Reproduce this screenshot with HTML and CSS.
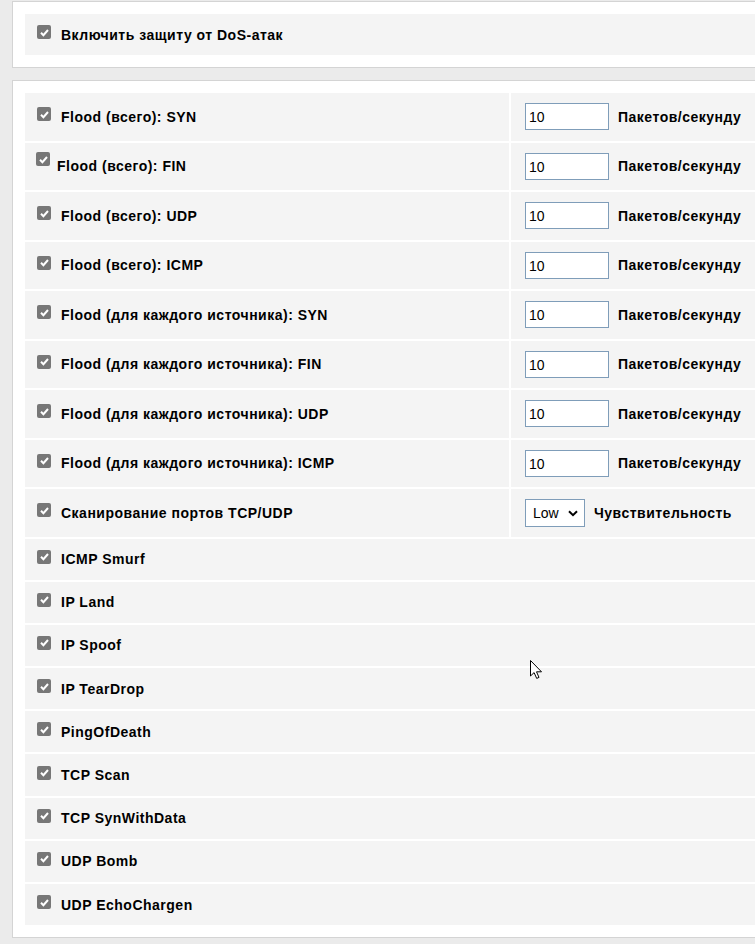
FILE: index.html
```html
<!DOCTYPE html>
<html>
<head>
<title>DoS</title>
<link rel="stylesheet" href="styles.css">
</head>
<body>
<div class="panel panel-top">
    <div class="line">
        <span class="box"><svg viewBox="0 0 13 13" width="13" height="13"><path d="M3 6.8l2.4 2.4 4.6-5.2" fill="none" stroke="#fff" stroke-width="2"/></svg></span>
        <span class="label">Включить защиту от DoS-атак</span>
    </div>
</div>

<div class="panel">
    <div class="grid">
        <div class="cell tall">
            <span class="box"><svg viewBox="0 0 13 13" width="13" height="13"><path d="M3 6.8l2.4 2.4 4.6-5.2" fill="none" stroke="#fff" stroke-width="2"/></svg></span>
            <span class="label">Flood (всего): SYN</span>
        </div>
        <div class="cell tall right">
            <input class="num" type="text" value="10"><span class="label unit">Пакетов/секунду</span>
        </div>

        <div class="cell tall tight">
            <span class="box"><svg viewBox="0 0 13 13" width="13" height="13"><path d="M3 6.8l2.4 2.4 4.6-5.2" fill="none" stroke="#fff" stroke-width="2"/></svg></span>
            <span class="label">Flood (всего): FIN</span>
        </div>
        <div class="cell tall right">
            <input class="num" type="text" value="10"><span class="label unit">Пакетов/секунду</span>
        </div>

        <div class="cell tall">
            <span class="box"><svg viewBox="0 0 13 13" width="13" height="13"><path d="M3 6.8l2.4 2.4 4.6-5.2" fill="none" stroke="#fff" stroke-width="2"/></svg></span>
            <span class="label">Flood (всего): UDP</span>
        </div>
        <div class="cell tall right">
            <input class="num" type="text" value="10"><span class="label unit">Пакетов/секунду</span>
        </div>

        <div class="cell tall">
            <span class="box"><svg viewBox="0 0 13 13" width="13" height="13"><path d="M3 6.8l2.4 2.4 4.6-5.2" fill="none" stroke="#fff" stroke-width="2"/></svg></span>
            <span class="label">Flood (всего): ICMP</span>
        </div>
        <div class="cell tall right">
            <input class="num" type="text" value="10"><span class="label unit">Пакетов/секунду</span>
        </div>

        <div class="cell tall">
            <span class="box"><svg viewBox="0 0 13 13" width="13" height="13"><path d="M3 6.8l2.4 2.4 4.6-5.2" fill="none" stroke="#fff" stroke-width="2"/></svg></span>
            <span class="label">Flood (для каждого источника): SYN</span>
        </div>
        <div class="cell tall right">
            <input class="num" type="text" value="10"><span class="label unit">Пакетов/секунду</span>
        </div>

        <div class="cell tall">
            <span class="box"><svg viewBox="0 0 13 13" width="13" height="13"><path d="M3 6.8l2.4 2.4 4.6-5.2" fill="none" stroke="#fff" stroke-width="2"/></svg></span>
            <span class="label">Flood (для каждого источника): FIN</span>
        </div>
        <div class="cell tall right">
            <input class="num" type="text" value="10"><span class="label unit">Пакетов/секунду</span>
        </div>

        <div class="cell tall">
            <span class="box"><svg viewBox="0 0 13 13" width="13" height="13"><path d="M3 6.8l2.4 2.4 4.6-5.2" fill="none" stroke="#fff" stroke-width="2"/></svg></span>
            <span class="label">Flood (для каждого источника): UDP</span>
        </div>
        <div class="cell tall right">
            <input class="num" type="text" value="10"><span class="label unit">Пакетов/секунду</span>
        </div>

        <div class="cell tall">
            <span class="box"><svg viewBox="0 0 13 13" width="13" height="13"><path d="M3 6.8l2.4 2.4 4.6-5.2" fill="none" stroke="#fff" stroke-width="2"/></svg></span>
            <span class="label">Flood (для каждого источника): ICMP</span>
        </div>
        <div class="cell tall right">
            <input class="num" type="text" value="10"><span class="label unit">Пакетов/секунду</span>
        </div>

        <div class="cell tall">
            <span class="box"><svg viewBox="0 0 13 13" width="13" height="13"><path d="M3 6.8l2.4 2.4 4.6-5.2" fill="none" stroke="#fff" stroke-width="2"/></svg></span>
            <span class="label">Сканирование портов TCP/UDP</span>
        </div>
        <div class="cell tall right">
            <div class="sel"><span>Low</span><svg viewBox="0 0 10 7" width="10" height="7"><path d="M1 1.2l4 4 4-4" fill="none" stroke="#000" stroke-width="2"/></svg></div><span class="label sens">Чувствительность</span>
        </div>

        <div class="cell wide">
            <span class="box"><svg viewBox="0 0 13 13" width="13" height="13"><path d="M3 6.8l2.4 2.4 4.6-5.2" fill="none" stroke="#fff" stroke-width="2"/></svg></span>
            <span class="label">ICMP Smurf</span>
        </div>
        <div class="cell wide">
            <span class="box"><svg viewBox="0 0 13 13" width="13" height="13"><path d="M3 6.8l2.4 2.4 4.6-5.2" fill="none" stroke="#fff" stroke-width="2"/></svg></span>
            <span class="label">IP Land</span>
        </div>
        <div class="cell wide">
            <span class="box"><svg viewBox="0 0 13 13" width="13" height="13"><path d="M3 6.8l2.4 2.4 4.6-5.2" fill="none" stroke="#fff" stroke-width="2"/></svg></span>
            <span class="label">IP Spoof</span>
        </div>
        <div class="cell wide">
            <span class="box"><svg viewBox="0 0 13 13" width="13" height="13"><path d="M3 6.8l2.4 2.4 4.6-5.2" fill="none" stroke="#fff" stroke-width="2"/></svg></span>
            <span class="label">IP TearDrop</span>
        </div>
        <div class="cell wide">
            <span class="box"><svg viewBox="0 0 13 13" width="13" height="13"><path d="M3 6.8l2.4 2.4 4.6-5.2" fill="none" stroke="#fff" stroke-width="2"/></svg></span>
            <span class="label">PingOfDeath</span>
        </div>
        <div class="cell wide">
            <span class="box"><svg viewBox="0 0 13 13" width="13" height="13"><path d="M3 6.8l2.4 2.4 4.6-5.2" fill="none" stroke="#fff" stroke-width="2"/></svg></span>
            <span class="label">TCP Scan</span>
        </div>
        <div class="cell wide">
            <span class="box"><svg viewBox="0 0 13 13" width="13" height="13"><path d="M3 6.8l2.4 2.4 4.6-5.2" fill="none" stroke="#fff" stroke-width="2"/></svg></span>
            <span class="label">TCP SynWithData</span>
        </div>
        <div class="cell wide">
            <span class="box"><svg viewBox="0 0 13 13" width="13" height="13"><path d="M3 6.8l2.4 2.4 4.6-5.2" fill="none" stroke="#fff" stroke-width="2"/></svg></span>
            <span class="label">UDP Bomb</span>
        </div>
        <div class="cell wide">
            <span class="box"><svg viewBox="0 0 13 13" width="13" height="13"><path d="M3 6.8l2.4 2.4 4.6-5.2" fill="none" stroke="#fff" stroke-width="2"/></svg></span>
            <span class="label">UDP EchoChargen</span>
        </div>
    </div>
</div>

<svg class="cursor" viewBox="0 0 13 20" width="13" height="20"><path d="M0.5 0.5v15.5l3.6-3.4 2.6 5.8 2.3-1-2.5-5.6h5z" fill="#fff" stroke="#000" stroke-width="1" stroke-linejoin="round"/></svg>
</body>
</html>
```

FILE: styles.css
```css
html, body {
    overflow: hidden;
}
body {
    margin: 0;
    padding: 1px 0 0 12px;
    background-color: #ebebeb;
    font-family: "Liberation Sans", Arial, sans-serif;
    font-size: 14px;
    color: #000;
    position: relative;
    height: 943px;
}

.panel {
    width: 770px;
    background-color: #fff;
    border: 1px solid #d4d4d4;
    padding: 12px;
    margin-bottom: 12px;
}

.line {
    height: 41px;
    background-color: #f4f4f4;
    display: flex;
    align-items: center;
    padding-left: 12px;
}

.grid {
    display: grid;
    grid-template-columns: 484px 1fr;
    gap: 2px;
}

.cell {
    background-color: #f4f4f4;
    display: flex;
    align-items: center;
    padding-left: 12px;
}
.tall {
    height: 47.5px;
}
.wide {
    grid-column: 1 / -1;
    height: 41.2px;
}
.right {
    padding-left: 14px;
}

.box {
    width: 14px;
    height: 14px;
    border-radius: 2px;
    background-color: #777;
    display: flex;
    align-items: center;
    justify-content: center;
    margin-right: 10px;
    margin-top: -5px;
}
.tight {
    padding-left: 11px;
}
.tight .box {
    margin-right: 7px;
    margin-top: -14px;
}

.label {
    font-weight: bold;
    letter-spacing: 0.5px;
}

.num {
    box-sizing: border-box;
    width: 84px;
    height: 27px;
    border: 1px solid #7f9db9;
    padding: 1px 3px 0;
    font-family: "Liberation Sans", Arial, sans-serif;
    font-size: 14px;
    color: #000;
    margin: 0 9px 0 0;
}

.sel {
    box-sizing: border-box;
    width: 60px;
    height: 28px;
    border: 1px solid #7f9db9;
    background-color: #fff;
    display: flex;
    align-items: center;
    justify-content: space-between;
    padding: 1px 6px 0 7px;
    margin-right: 9px;
    font-size: 14px;
}

.cursor {
    position: absolute;
    left: 530px;
    top: 660px;
}
```
